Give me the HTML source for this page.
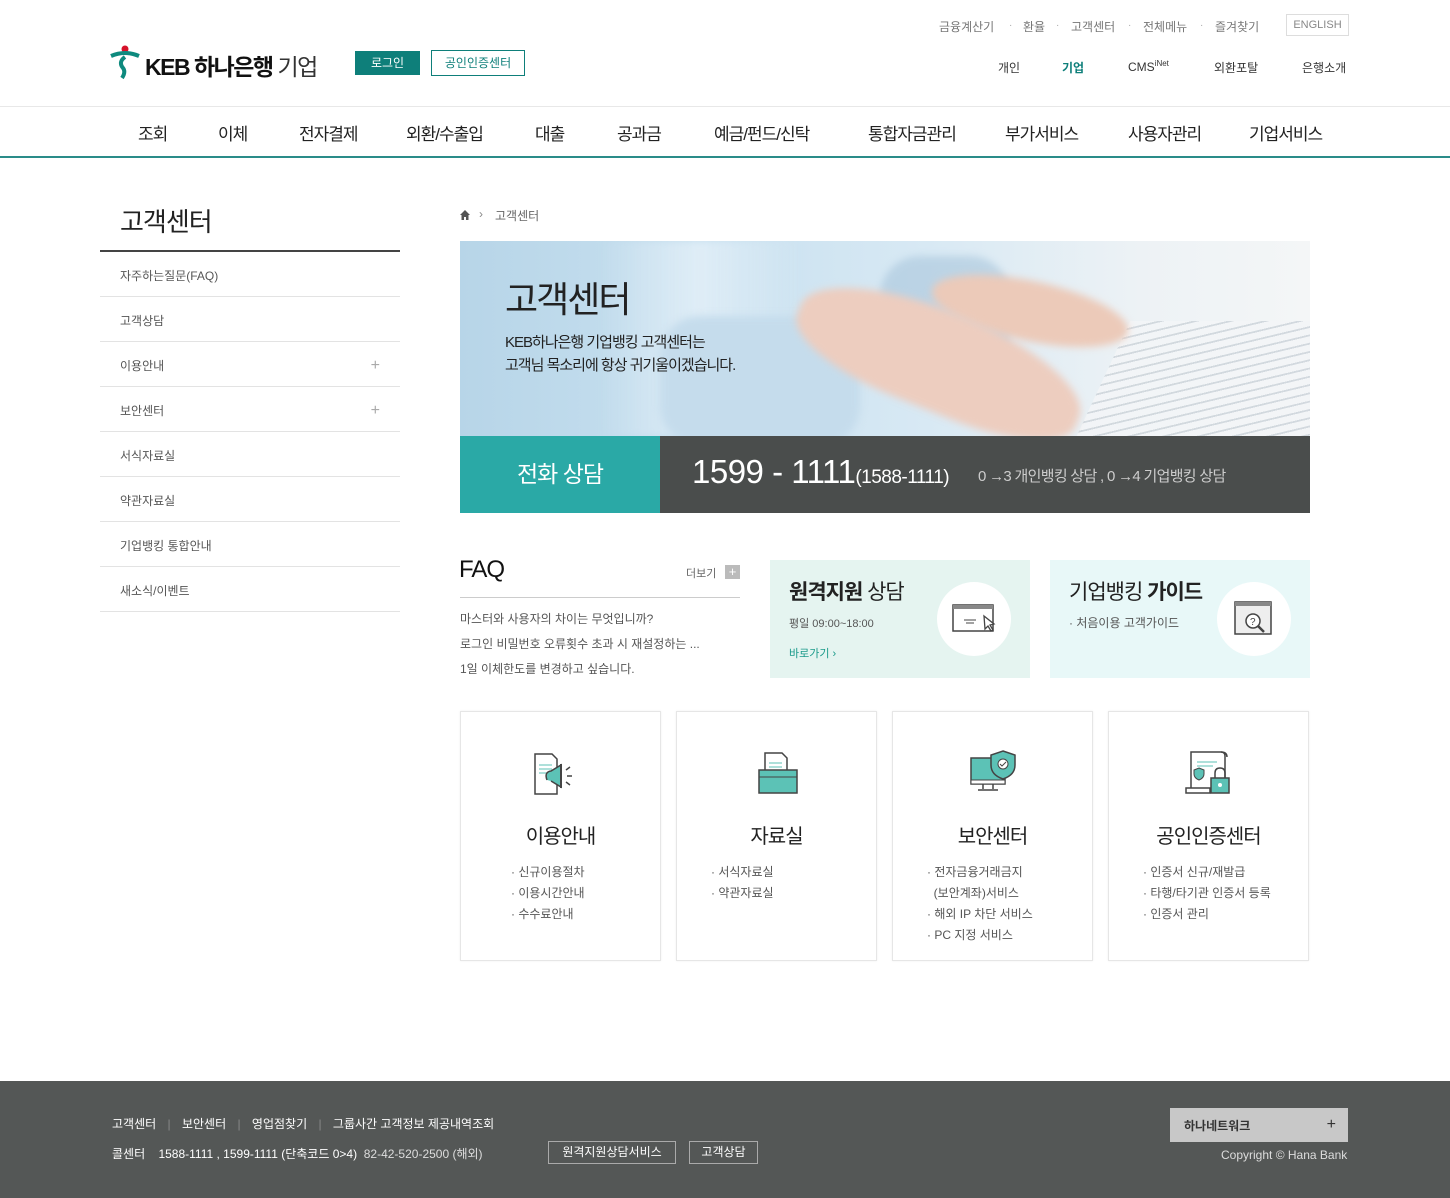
<!DOCTYPE html>
<html lang="ko"><head><meta charset="utf-8">
<style>
*{margin:0;padding:0;box-sizing:border-box}
body{width:1450px;height:1198px;position:relative;background:#fff;font-family:"Liberation Sans","Noto Sans CJK KR",sans-serif;color:#333;overflow:hidden}
.a{position:absolute;white-space:nowrap}
.tl{font-size:12px;color:#777;top:18px}
.dot{font-size:10px;color:#aaa;top:20px}
.gn{font-size:12px;color:#333;top:59px}
.mn{font-size:17px;color:#222;top:120px;letter-spacing:-1px}
.side{position:absolute;left:100px;width:300px;height:45px;border-bottom:1px solid #e3e3e3;font-size:12px;color:#555;padding:15px 0 0 20px}
.plus{position:absolute;right:20px;top:15px;font-size:16px;color:#aaa;font-weight:100}
.card{position:absolute;top:711px;width:201px;height:250px;border:1px solid #e6e6e6;box-shadow:0 0 2px #eee}
.card h3{position:absolute;top:108px;width:100%;text-align:center;font-size:20px;font-weight:normal;color:#222;letter-spacing:-1px}
.card ul{position:absolute;top:150px;list-style:none;font-size:12px;color:#555;line-height:21px}
.card li:before{content:"· ";}
.fl{font-size:12px;color:#fff}
.bl{filter:blur(4px)}
</style></head><body>
<!-- header -->
<div class="a tl" style="left:939px">금융계산기</div>
<div class="a dot" style="left:1009px">·</div>
<div class="a tl" style="left:1023px">환율</div>
<div class="a dot" style="left:1056px">·</div>
<div class="a tl" style="left:1071px">고객센터</div>
<div class="a dot" style="left:1128px">·</div>
<div class="a tl" style="left:1143px">전체메뉴</div>
<div class="a dot" style="left:1200px">·</div>
<div class="a tl" style="left:1215px">즐겨찾기</div>
<div class="a" style="left:1286px;top:14px;width:63px;height:22px;border:1px solid #ddd;font-size:11px;color:#888;text-align:center;line-height:20px">ENGLISH</div>

<svg class="a" style="left:110px;top:44px" width="30" height="36" viewBox="0 0 30 36"><circle cx="15" cy="5" r="3.5" fill="#d6122a"/><path d="M1 12 Q15 6 29 12" stroke="#0e8a7e" stroke-width="4" fill="none"/><path d="M15 13 Q8 18 13 24 Q16 28 12 34" stroke="#0e8a7e" stroke-width="4" fill="none"/></svg>
<div class="a" style="left:145px;top:48px;font-size:23px;font-weight:bold;color:#111;letter-spacing:-1.5px">KEB 하나은행 <span style="font-weight:normal;color:#333">기업</span></div>
<div class="a" style="left:355px;top:51px;width:65px;height:24px;background:#0e7f7a;color:#fff;font-size:12px;text-align:center;line-height:24px">로그인</div>
<div class="a" style="left:431px;top:50px;width:94px;height:26px;border:1px solid #0e7f7a;color:#0e7f7a;font-size:12px;text-align:center;line-height:24px">공인인증센터</div>

<div class="a gn" style="left:998px">개인</div>
<div class="a gn" style="left:1062px;font-weight:bold;color:#0e7f7a">기업</div>
<div class="a gn" style="left:1128px">CMS<sup style="font-size:8px">iNet</sup></div>
<div class="a gn" style="left:1214px">외환포탈</div>
<div class="a gn" style="left:1302px">은행소개</div>

<div class="a" style="left:0;top:106px;width:1450px;height:1px;background:#e8e8e8"></div>
<div class="a" style="left:0;top:156px;width:1450px;height:2px;background:#2a8c89"></div>
<div class="a mn" style="left:138px">조회</div>
<div class="a mn" style="left:218px">이체</div>
<div class="a mn" style="left:299px">전자결제</div>
<div class="a mn" style="left:406px">외환/수출입</div>
<div class="a mn" style="left:535px">대출</div>
<div class="a mn" style="left:617px">공과금</div>
<div class="a mn" style="left:714px">예금/펀드/신탁</div>
<div class="a mn" style="left:868px">통합자금관리</div>
<div class="a mn" style="left:1005px">부가서비스</div>
<div class="a mn" style="left:1128px">사용자관리</div>
<div class="a mn" style="left:1249px">기업서비스</div>

<!-- sidebar -->
<div class="a" style="left:120px;top:202px;font-size:26px;color:#222;letter-spacing:-1px">고객센터</div>
<div class="a" style="left:100px;top:250px;width:300px;height:2px;background:#444"></div>
<div class="side" style="top:252px">자주하는질문(FAQ)</div>
<div class="side" style="top:297px">고객상담</div>
<div class="side" style="top:342px">이용안내<span class="plus">+</span></div>
<div class="side" style="top:387px">보안센터<span class="plus">+</span></div>
<div class="side" style="top:432px">서식자료실</div>
<div class="side" style="top:477px">약관자료실</div>
<div class="side" style="top:522px">기업뱅킹 통합안내</div>
<div class="side" style="top:567px">새소식/이벤트</div>

<!-- breadcrumb -->
<svg class="a" style="left:459px;top:209px" width="12" height="12" viewBox="0 0 12 12"><path d="M6 1 L11 6 H9.5 V11 H7 V8 H5 V11 H2.5 V6 H1 Z" fill="#555"/></svg>
<div class="a" style="left:479px;top:207px;font-size:12px;color:#888">›</div>
<div class="a" style="left:495px;top:207px;font-size:12px;color:#666">고객센터</div>

<!-- banner -->
<div class="a" style="left:460px;top:241px;width:850px;height:195px;overflow:hidden;background:linear-gradient(90deg,#b7d5e8 0%,#c9e1f0 30%,#d8e9f4 55%,#edf2f5 80%,#f4f6f7 100%)">
 <div class="a bl" style="left:140px;top:0;width:200px;height:195px;background:linear-gradient(90deg,rgba(255,255,255,0),rgba(225,238,247,.9),rgba(255,255,255,0))"></div>
 <div class="a bl" style="left:420px;top:15px;width:130px;height:120px;background:#a9c6dc;border-radius:40px;opacity:.6"></div>
 <div class="a" style="left:640px;top:80px;width:240px;height:130px;background:repeating-linear-gradient(165deg,#f3f5f7 0 7px,#cfd6dc 7px 9px);transform:skewX(-25deg);opacity:.9"></div>
 <div class="a bl" style="left:470px;top:40px;width:200px;height:60px;background:#eccab9;border-radius:50%;transform:rotate(12deg)"></div>
 <div class="a bl" style="left:200px;top:75px;width:200px;height:130px;background:#c5dcec;border-radius:40px"></div>
 <div class="a bl" style="left:330px;top:70px;width:300px;height:100px;background:#edcdbf;border-radius:50% 50% 40% 40%;transform:rotate(22deg)"></div>
 <div class="a" style="left:45px;top:30px;font-size:36px;color:#222;letter-spacing:-2px">고객센터</div>
 <div class="a" style="left:45px;top:90px;font-size:15px;color:#222;line-height:23px;letter-spacing:-1px">KEB하나은행 기업뱅킹 고객센터는<br>고객님 목소리에 항상 귀기울이겠습니다.</div>
</div>
<div class="a" style="left:460px;top:436px;width:200px;height:77px;background:#2aa9a6;color:#fff;font-size:23px;text-align:center;line-height:77px;letter-spacing:-1px">전화 상담</div>
<div class="a" style="left:660px;top:436px;width:650px;height:77px;background:#4a4d4c"></div>
<div class="a" style="left:692px;top:453px;font-size:33px;color:#fff;letter-spacing:-0.5px">1599 - 1111<span style="font-size:19px">(1588-1111)</span></div>
<div class="a" style="left:978px;top:465px;font-size:15px;color:#ccc;letter-spacing:-.7px">0 →3 개인뱅킹 상담 , 0 →4 기업뱅킹 상담</div>

<!-- FAQ -->
<div class="a" style="left:459px;top:556px;font-size:24px;color:#111;letter-spacing:-1px">FAQ</div>
<div class="a" style="left:686px;top:565px;font-size:11px;color:#666">더보기</div>
<div class="a" style="left:725px;top:565px;width:15px;height:14px;background:#bbb;color:#fff;font-size:13px;text-align:center;line-height:14px">+</div>
<div class="a" style="left:460px;top:597px;width:280px;height:1px;background:#ccc"></div>
<div class="a" style="left:460px;top:607px;font-size:12px;color:#555;line-height:25px">마스터와 사용자의 차이는 무엇입니까?<br>로그인 비밀번호 오류횟수 초과 시 재설정하는 ...<br>1일 이체한도를 변경하고 싶습니다.</div>

<div class="a" style="left:770px;top:560px;width:260px;height:118px;background:#e5f4f0"></div>
<div class="a" style="left:789px;top:576px;font-size:21px;color:#222;letter-spacing:-1px"><b>원격지원</b> 상담</div>
<div class="a" style="left:789px;top:615px;font-size:11px;color:#555">평일 09:00~18:00</div>
<div class="a" style="left:789px;top:645px;font-size:11px;color:#1a9a8a">바로가기 ›</div>
<div class="a" style="left:937px;top:582px;width:74px;height:74px;border-radius:50%;background:#fff"></div>
<svg class="a" style="left:952px;top:604px" width="46" height="32" viewBox="0 0 46 32"><rect x="1" y="1" width="40" height="26" fill="#fff" stroke="#444" stroke-width="1.5"/><rect x="1" y="1" width="40" height="4" fill="#888"/><path d="M12 16h12M14 19h8" stroke="#444"/><path d="M32 12l10 8-4 1 3 5-2 1-3-5-3 3z" fill="#fff" stroke="#444" stroke-width="1.3"/></svg>

<div class="a" style="left:1050px;top:560px;width:260px;height:118px;background:#e8f8f8"></div>
<div class="a" style="left:1069px;top:576px;font-size:21px;color:#222;letter-spacing:-1px">기업뱅킹 <b>가이드</b></div>
<div class="a" style="left:1069px;top:614px;font-size:12px;color:#555">· 처음이용 고객가이드</div>
<div class="a" style="left:1217px;top:582px;width:74px;height:74px;border-radius:50%;background:#fff"></div>
<svg class="a" style="left:1234px;top:601px" width="40" height="36" viewBox="0 0 40 36"><rect x="1" y="1" width="36" height="32" fill="#eee" stroke="#444" stroke-width="1.5"/><rect x="1" y="1" width="36" height="4" fill="#888"/><circle cx="19" cy="20" r="7" fill="#fff" stroke="#444" stroke-width="1.5"/><text x="16" y="24" font-size="10" fill="#444" font-family="Liberation Sans">?</text><path d="M24 25l6 6" stroke="#444" stroke-width="2.5"/></svg>

<!-- cards -->
<div class="card" style="left:460px">
 <svg class="a" style="left:70px;top:38px" width="62" height="48" viewBox="0 0 62 48"><path d="M4 4h17l5 5v35H4z" fill="#fff" stroke="#444" stroke-width="1.5"/><path d="M8 15h13M8 19h13M8 23h10" stroke="#5cc2b6"/><path d="M16 30q-3-8 4-9l10-6v22l-10-6" fill="#5cc2b6" stroke="#444" stroke-width="1.5"/><path d="M30 14v24" stroke="#444" stroke-width="2"/><path d="M35 20l4-3M36 26h5M35 32l4 3" stroke="#444" stroke-width="1.5"/></svg>
 <h3>이용안내</h3>
 <ul style="left:50px"><li>신규이용절차</li><li>이용시간안내</li><li>수수료안내</li></ul>
</div>
<div class="card" style="left:676px">
 <svg class="a" style="left:79px;top:38px" width="44" height="46" viewBox="0 0 44 46"><path d="M9 3h17l5 5v25H9z" fill="#fff" stroke="#444" stroke-width="1.5"/><path d="M13 13h13M13 17h13M13 21h10" stroke="#5cc2b6"/><path d="M3 20h38v23H3z" fill="#5cc2b6" stroke="#444" stroke-width="1.5"/><path d="M3 27h38" stroke="#444"/></svg>
 <h3>자료실</h3>
 <ul style="left:34px"><li>서식자료실</li><li>약관자료실</li></ul>
</div>
<div class="card" style="left:892px">
 <svg class="a" style="left:76px;top:36px" width="50" height="50" viewBox="0 0 50 50"><rect x="2" y="10" width="34" height="26" fill="#5cc2b6" stroke="#444" stroke-width="1.5"/><rect x="2" y="32" width="34" height="4" fill="#fff" stroke="#444"/><path d="M14 36v5M24 36v5M9 42h20" stroke="#444" stroke-width="1.5"/><path d="M34 3l12 4v10q0 10-12 14q-12-4-12-14V7z" fill="#5cc2b6" stroke="#444" stroke-width="1.5"/><circle cx="34" cy="16" r="5" fill="#fff" stroke="#444"/><path d="M31 16l2 2 4-4" stroke="#444" fill="none"/></svg>
 <h3>보안센터</h3>
 <ul style="left:34px"><li>전자금융거래금지<br>&nbsp;&nbsp;(보안계좌)서비스</li><li>해외 IP 차단 서비스</li><li>PC 지정 서비스</li></ul>
</div>
<div class="card" style="left:1108px">
 <svg class="a" style="left:74px;top:36px" width="54" height="50" viewBox="0 0 54 50"><path d="M8 4h30q4 0 4 4v36H8z" fill="#fff" stroke="#444" stroke-width="1.5"/><path d="M38 4q6 0 6 5" stroke="#444" fill="none" stroke-width="1.5"/><path d="M3 40h24v5H3z" fill="#fff" stroke="#444" stroke-width="1.5"/><path d="M14 14h20M14 18h16" stroke="#5cc2b6"/><path d="M16 20l5 2v4q0 4-5 6q-5-2-5-6v-4z" fill="#5cc2b6" stroke="#444"/><path d="M32 30v-5q0-5 5-5t5 5v5" stroke="#444" fill="none" stroke-width="1.5"/><rect x="28" y="30" width="18" height="15" fill="#5cc2b6" stroke="#444" stroke-width="1.5"/><circle cx="37" cy="37" r="2" fill="#fff"/></svg>
 <h3>공인인증센터</h3>
 <ul style="left:34px"><li>인증서 신규/재발급</li><li>타행/타기관 인증서 등록</li><li>인증서 관리</li></ul>
</div>

<!-- footer -->
<div class="a" style="left:0;top:1081px;width:1450px;height:117px;background:#545756"></div>
<div class="a fl" style="left:112px;top:1115px">고객센터 <span style="color:#888;margin:0 8px">|</span> 보안센터 <span style="color:#888;margin:0 8px">|</span> 영업점찾기 <span style="color:#888;margin:0 8px">|</span> 그룹사간 고객정보 제공내역조회</div>
<div class="a fl" style="left:112px;top:1145px">콜센터 &nbsp;&nbsp; 1588-1111 , 1599-1111 (단축코드 0&gt;4) &nbsp;<span style="color:#ddd">82-42-520-2500 (해외)</span></div>
<div class="a fl" style="left:548px;top:1141px;width:128px;height:23px;border:1px solid #aaa;text-align:center;line-height:21px">원격지원상담서비스</div>
<div class="a fl" style="left:689px;top:1141px;width:69px;height:23px;border:1px solid #aaa;text-align:center;line-height:21px">고객상담</div>
<div class="a" style="left:1170px;top:1108px;width:178px;height:34px;background:#c8c8c8;font-size:12px;color:#333;font-weight:bold;padding:9px 0 0 14px">하나네트워크<span style="position:absolute;right:12px;top:8px;font-weight:normal;font-size:16px">+</span></div>
<div class="a" style="left:1221px;top:1148px;font-size:12px;color:#ddd">Copyright © Hana Bank</div>
</body></html>
